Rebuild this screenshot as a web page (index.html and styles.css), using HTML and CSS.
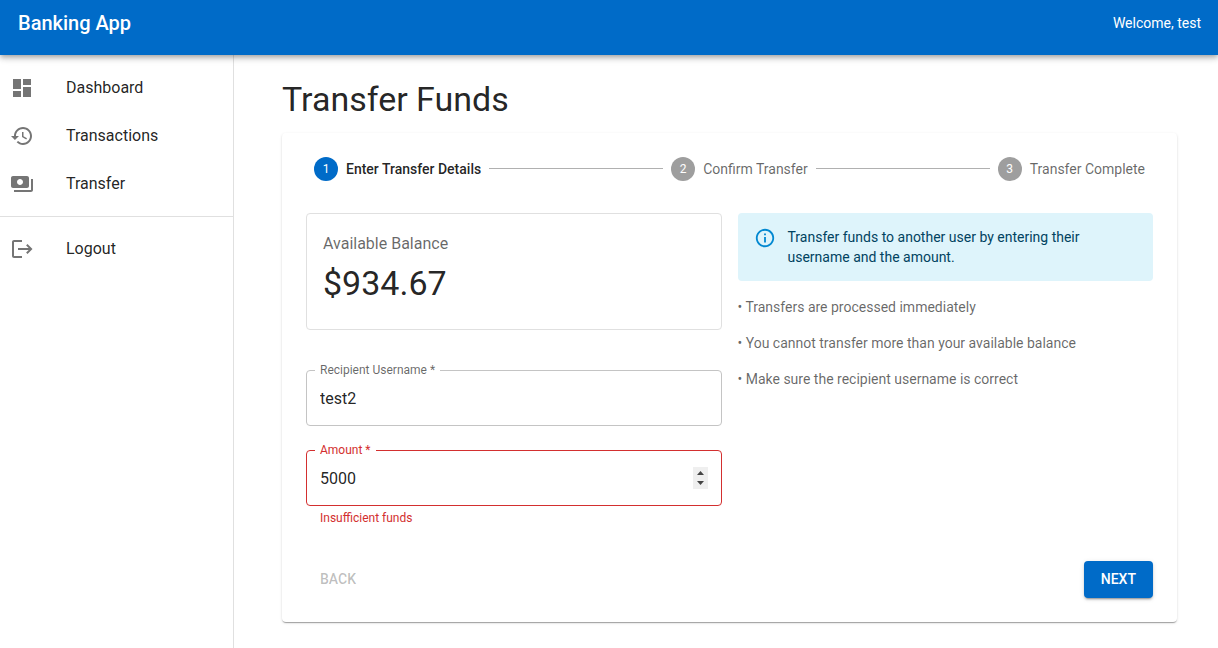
FILE: index.html
```html
<!DOCTYPE html>
<html lang="en">
<head>
  <meta charset="utf-8">
  <meta name="viewport" content="width=device-width, initial-scale=1">
  <title>Banking App</title>
  <link rel="stylesheet" href="styles.css">
</head>
<body>
  <header class="app-bar">
    <div class="app-title">Banking App</div>
    <div class="welcome">Welcome, test</div>
  </header>
  <div class="shell">
    <nav class="sidebar">
      <div class="nav-list">
        <a class="nav-item" href="#">
          <svg class="icon" viewBox="0 0 24 24"><path d="M3 13h8V3H3v10zm0 8h8v-6H3v6zm10 0h8V11h-8v10zm0-18v6h8V3h-8z"/></svg>
          Dashboard
        </a>
        <a class="nav-item" href="#">
          <svg class="icon" viewBox="0 0 24 24"><path d="M13 3c-4.970 0-9 4.030-9 9H1l3.890 3.890.070.140L9 12H6c0-3.870 3.130-7 7-7s7 3.130 7 7-3.130 7-7 7c-1.930 0-3.680-.790-4.940-2.060l-1.420 1.420C8.270 19.990 10.510 21 13 21c4.970 0 9-4.030 9-9s-4.030-9-9-9zm-1 5v5l4.280 2.540.720-1.210-3.500-2.080V8H12z"/></svg>
          Transactions
        </a>
        <a class="nav-item" href="#">
          <svg class="icon" viewBox="0 0 24 24"><path d="M19 14V6c0-1.100-.9-2-2-2H3c-1.100 0-2 .9-2 2v8c0 1.100.9 2 2 2h14c1.100 0 2-.9 2-2zm-9-1c-1.660 0-3-1.340-3-3s1.340-3 3-3 3 1.340 3 3-1.340 3-3 3zm13-6v11c0 1.100-.9 2-2 2H4v-2h17V7h2z"/></svg>
          Transfer
        </a>
      </div>
      <div class="nav-list nav-list-end">
        <a class="nav-item" href="#">
          <svg class="icon" viewBox="0 0 24 24"><path d="M4 3h8v2H4v14h8v2H4c-1.100 0-2-.9-2-2V5c0-1.100.9-2 2-2z"/><path d="M17.500 7l-1.410 1.410L18.670 11H8v2h10.670l-2.580 2.580L17.500 17l5-5z"/></svg>
          Logout
        </a>
      </div>
    </nav>
    <main class="content">
      <h1 class="page-title">Transfer Funds</h1>
      <form class="card">
        <ol class="stepper">
          <li class="step step-active"><span class="step-number">1</span>Enter Transfer Details</li>
          <li class="connector" aria-hidden="true"></li>
          <li class="step"><span class="step-number">2</span>Confirm Transfer</li>
          <li class="connector" aria-hidden="true"></li>
          <li class="step"><span class="step-number">3</span>Transfer Complete</li>
        </ol>
        <div class="columns">
          <div>
            <section class="balance">
              <div class="balance-label">Available Balance</div>
              <div class="balance-amount">$934.67</div>
            </section>
            <fieldset class="field">
              <legend class="field-legend"><label for="recipient">Recipient Username *</label></legend>
              <input class="field-input" id="recipient" type="text" value="test2">
            </fieldset>
            <fieldset class="field field-error">
              <legend class="field-legend"><label for="amount">Amount *</label></legend>
              <input class="field-input" id="amount" type="number" value="5000" aria-describedby="amount-error">
            </fieldset>
            <p class="helper" id="amount-error">Insufficient funds</p>
          </div>
          <div>
            <div class="alert">
              <svg class="alert-icon" viewBox="0 0 24 24"><path d="M11 7h2v2h-2zm0 4h2v6h-2zm1-9C6.480 2 2 6.480 2 12s4.480 10 10 10 10-4.480 10-10S17.520 2 12 2zm0 18c-4.410 0-8-3.590-8-8s3.590-8 8-8 8 3.590 8 8-3.590 8-8 8z"/></svg>
              <span>Transfer funds to another user by entering their username and the amount.</span>
            </div>
            <p class="note">• Transfers are processed immediately</p>
            <p class="note">• You cannot transfer more than your available balance</p>
            <p class="note">• Make sure the recipient username is correct</p>
          </div>
        </div>
        <div class="actions">
          <button class="button" type="button" disabled>BACK</button>
          <button class="button button-primary" type="button">NEXT</button>
        </div>
      </form>
    </main>
  </div>
</body>
</html>
```
FILE: styles.css
```css
* {
  box-sizing: border-box;
}

body {
  margin: 0;
  min-height: 100vh;
  display: flex;
  flex-direction: column;
  background: #fff;
  color: rgba(0, 0, 0, 0.87);
  font-family: Roboto, "Liberation Sans", sans-serif;
  font-size: 16px;
  line-height: 24px;
}

.app-bar {
  position: relative;
  z-index: 1;
  display: flex;
  align-items: center;
  justify-content: space-between;
  padding: 7px 17px 16px 18px;
  background: #006bc8;
  color: #fff;
  box-shadow: 0 2px 4px -1px rgba(0, 0, 0, 0.2), 0 4px 5px 0 rgba(0, 0, 0, 0.14), 0 1px 10px 0 rgba(0, 0, 0, 0.12);
}

.app-title {
  font-size: 20px;
  font-weight: 500;
  line-height: 32px;
}

.welcome {
  font-size: 14px;
  line-height: 20px;
}

.shell {
  flex: 1;
  display: flex;
}

.sidebar {
  flex: 0 0 234px;
  border-right: 1px solid #e0e0e0;
}

.nav-list {
  padding: 9px 0 8px;
}

.nav-list-end {
  padding-top: 8px;
  border-top: 1px solid #e0e0e0;
}

.nav-item {
  display: flex;
  align-items: center;
  gap: 32px;
  height: 48px;
  padding: 0 10px;
  color: inherit;
  text-decoration: none;
}

.icon {
  width: 24px;
  height: 24px;
  fill: #757575;
}

.content {
  flex: 1;
  min-width: 0;
  padding: 23px 41px 24px 48px;
}

.page-title {
  margin: 0 0 13px;
  font-size: 34px;
  font-weight: 400;
  line-height: 42px;
}

.card {
  padding: 24px;
  border-radius: 4px;
  box-shadow: 0 2px 1px -1px rgba(0, 0, 0, 0.2), 0 1px 1px 0 rgba(0, 0, 0, 0.14), 0 1px 3px 0 rgba(0, 0, 0, 0.12);
}

.stepper {
  display: flex;
  align-items: center;
  gap: 8px;
  margin: 0 0 32px;
  padding: 0 8px;
  list-style: none;
  font-size: 14px;
}

.step {
  display: flex;
  align-items: center;
  gap: 8px;
  color: rgba(0, 0, 0, 0.6);
}

.step-active {
  color: rgba(0, 0, 0, 0.87);
  font-weight: 500;
}

.step-number {
  width: 24px;
  height: 24px;
  border-radius: 50%;
  background: #9e9e9e;
  color: #fff;
  font-size: 12px;
  font-weight: 400;
  text-align: center;
}

.step-active .step-number {
  background: #006bc8;
}

.connector {
  flex: 1;
  height: 2px;
  border-top: 1px solid #b0b0b0;
}

.columns {
  display: grid;
  grid-template-columns: 1fr 1fr;
  gap: 16px;
}

.balance {
  margin-bottom: 34px;
  padding: 18px 16px 25px;
  border: 1px solid #e0e0e0;
  border-radius: 4px;
}

.balance-label {
  margin-bottom: 6px;
  color: rgba(0, 0, 0, 0.6);
}

.balance-amount {
  font-size: 34px;
  line-height: 42px;
}

.field {
  min-width: 0;
  margin: 0 0 18px;
  padding: 0 8px 5px;
  border: 1px solid #c4c4c4;
  border-radius: 4px;
}

.field-legend {
  padding: 0 5px;
  color: rgba(0, 0, 0, 0.6);
  font-size: 12px;
  line-height: 12px;
}

.field-input {
  display: block;
  width: 100%;
  padding: 11px 5px;
  border: 0;
  outline: 0;
  background: none;
  color: inherit;
  font: inherit;
  line-height: 22px;
  height: 44px;
}

.field-input::-webkit-inner-spin-button {
  appearance: none;
  width: 15px;
  height: 22px;
  opacity: 1;
  background: #efefef url("data:image/svg+xml,%3Csvg xmlns='http://www.w3.org/2000/svg' width='15' height='22'%3E%3Cpath d='M4 8L7.500 4L11 8zM4 14L7.500 18L11 14z' fill='%23444'/%3E%3C/svg%3E") no-repeat;
}

.field-error {
  margin-bottom: 2px;
  border-color: #d32f2f;
}

.field-error .field-legend {
  color: #d32f2f;
}

.helper {
  margin: 0 14px;
  color: #d32f2f;
  font-size: 12px;
  line-height: 20px;
}

.alert {
  display: flex;
  gap: 12px;
  padding: 14px 16px;
  border-radius: 4px;
  background: #def4fb;
  color: #014361;
  font-size: 14px;
  line-height: 20px;
}

.alert-icon {
  flex: none;
  width: 22px;
  height: 22px;
  fill: #0288d1;
}

.note {
  margin: 16px 0 0;
  color: rgba(0, 0, 0, 0.6);
  font-size: 14px;
  line-height: 20px;
}

.actions {
  display: flex;
  justify-content: space-between;
  margin-top: 33px;
}

.button {
  min-width: 64px;
  padding: 6px 8px;
  border: 0;
  border-radius: 4px;
  background: none;
  color: rgba(0, 0, 0, 0.26);
  font: inherit;
  font-size: 14px;
  font-weight: 500;
  line-height: 25px;
}

.button-primary {
  padding: 6px 17px;
  background: #006bc8;
  color: #fff;
  box-shadow: 0 3px 1px -2px rgba(0, 0, 0, 0.2), 0 2px 2px 0 rgba(0, 0, 0, 0.14), 0 1px 5px 0 rgba(0, 0, 0, 0.12);
}
```
